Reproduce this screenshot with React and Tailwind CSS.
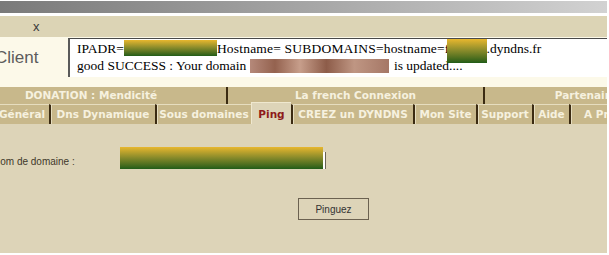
import React from "react";

const rowTwo = [
    { label: "Général", cls: "w-[56px] -ml-[7px]" },
    { label: "Dns Dynamique", cls: "w-[106px]" },
    { label: "Sous domaines", cls: "w-[96px]" },
    { label: "Ping", cls: "w-[40px]", active: true },
    { label: "CREEZ un DYNDNS", cls: "w-[122px]" },
    { label: "Mon Site", cls: "w-[63px]" },
    { label: "Support", cls: "w-[56px]" },
    { label: "Aide", cls: "w-[37px]" },
    { label: "A Propos", cls: "w-[81px]" },
];

function Redacted({ className }) {
    return (
        <span
            className={`inline-block bg-linear-to-b from-[#e8b72e] via-[#85892a] to-[#1f5c18] ${className}`}
        />
    );
}

export default function App() {
    return (
        <div className="w-[609px] h-[255px] overflow-hidden bg-white pt-[1px] pr-[2px] pb-[2px]">
            <div className="h-full flex flex-col overflow-hidden">
                {/* window title strip */}
                <div className="h-[12px] shrink-0 bg-linear-to-r from-[#7a7a7a] to-[#d2d2d2]" />
                <div className="h-[3px] shrink-0 bg-white" />
                <div className="h-[21px] shrink-0 bg-[#dcd4b5] flex items-center pl-[33px] font-['Liberation_Sans',Arial,sans-serif] text-[13px] text-[#3a3a3a]">
                    x
                </div>

                {/* status panel */}
                <div className="h-[50px] shrink-0 bg-[#fcf9e9] flex pt-[1px]">
                    <div className="w-[68px] shrink-0 pt-[7px] -ml-[5px] font-['Liberation_Sans',Arial,sans-serif] text-[17px] text-[#5c5c5c]">
                        Client
                    </div>
                    <div className="flex-1 h-[39px] ml-[5px] bg-white border-t border-l-2 border-t-[#4a4a4a] border-l-[#5a5a5a] pl-[7px] pt-[1px] font-['Liberation_Serif','Times_New_Roman',serif] text-[13.5px] leading-[17px] text-black whitespace-nowrap">
                        <div>
                            IPADR=
                            <Redacted className="w-[93px] h-[16px] align-top" />
                            <span className="tracking-[0.2px]">Hostname= SUBDOMAINS=hostname=f</span>
                            <span className="relative inline-block align-top w-[40px] h-[17px] -ml-[3px]">
                                <Redacted className="absolute left-0 -top-[1px] w-[40px] h-[24px]" />
                            </span>
                            .dyndns.fr
                        </div>
                        <div>
                            good SUCCESS : Your domain{" "}
                            <span className="inline-block align-top mt-[2px] w-[139px] h-[14px] blur-[0.6px] bg-[linear-gradient(90deg,#b5897a,#94624f_18%,#c79e8b_36%,#8d5c49_55%,#bf9683_75%,#a57766)]" />{" "}
                            <span className="ml-[2px]">is updated....</span>
                        </div>
                    </div>
                </div>

                {/* tabs, first row */}
                <div className="h-[17px] shrink-0 flex font-['DejaVu_Sans',Verdana,sans-serif] text-[10.5px] font-bold text-[#f6f1df] whitespace-nowrap">
                    <div className="w-[270px] -ml-[44px] shrink-0 bg-[#c8b88b] flex items-center justify-center">
                        DONATION : Mendicité
                    </div>
                    <div className="w-[257px] shrink-0 bg-[#c8b88b] border-l-2 border-[#3b2b12] flex items-center justify-center">
                        La french Connexion
                    </div>
                    <div className="w-[210px] shrink-0 bg-[#c8b88b] border-l-2 border-[#3b2b12] flex items-center justify-center">
                        Partenaires
                    </div>
                </div>

                {/* tabs, second row */}
                <div className="h-[20px] shrink-0 flex items-end font-['DejaVu_Sans',Verdana,sans-serif] text-[10.5px] font-bold whitespace-nowrap">
                    {rowTwo.map((t) =>
                        t.active ? (
                            <div
                                key={t.label}
                                className={`${t.cls} h-[22px] -mt-[2px] shrink-0 bg-[#ddd4b8] border-l border-t border-[#efe8cf] text-[#8e1a1a] flex items-center justify-center pt-[2px]`}
                            >
                                {t.label}
                            </div>
                        ) : (
                            <div
                                key={t.label}
                                className={`${t.cls} h-[20px] shrink-0 bg-[#c8b88b] border-l-2 border-l-[#3b2b12] border-t border-t-[#e6ddbf] shadow-[inset_1px_0_0_#e6ddbf] text-[#f6f1df] flex items-center justify-center`}
                            >
                                {t.label}
                            </div>
                        )
                    )}
                </div>

                {/* content */}
                <div className="flex-1 bg-[#ddd4b8] pt-[28px] font-['Liberation_Sans',Arial,sans-serif] text-[10px] text-[#3f382b]">
                    <div className="flex items-center">
                        <div className="w-[127px] -ml-[7px] shrink-0 pt-[2px]">
                            Nom de domaine :
                        </div>
                        <div className="relative w-[206px] h-[17px] bg-white border-r border-[#6a6355]">
                            <Redacted className="absolute left-0 -top-[5px] w-[203px] h-[22px]" />
                        </div>
                    </div>
                    <div className="mt-[29px] pl-[298px]">
                        <button className="w-[71px] h-[22px] border border-[#6b6150] bg-[#ddd4b8] text-[#333] text-[10px] font-['Liberation_Sans',Arial,sans-serif]">
                            Pinguez
                        </button>
                    </div>
                </div>
            </div>
        </div>
    );
}
